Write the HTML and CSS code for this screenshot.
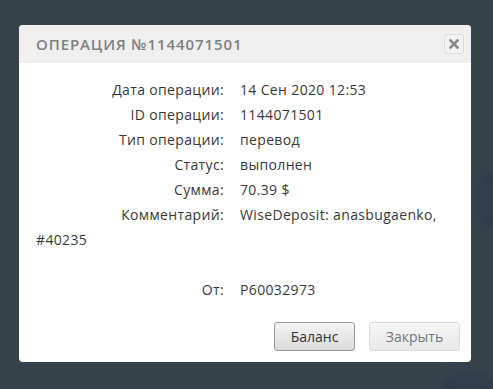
FILE: index.html
```html
<!DOCTYPE html>
<html lang="ru">
<head>
  <meta charset="UTF-8">
  <title>Операция №1144071501</title>
  <link rel="stylesheet" href="styles.css">
</head>
<body>
<div class="screen">

  <div class="blob blob-right"></div>
  <div class="blob blob-bottom"></div>

  <div class="dialog">
    <div class="dialog-head">
      <span class="dialog-title">Операция №1144071501</span>
      <button class="close" title="Закрыть">
        <svg width="10" height="10" viewBox="0 0 10 10">
          <path d="M1.5 1.5 L8.5 8.5 M8.5 1.5 L1.5 8.5" stroke="#8a8a8a" stroke-width="2.6" stroke-linecap="square"/>
        </svg>
      </button>
    </div>

    <div class="dialog-body">
      <div class="row"><span class="lbl">Дата операции:</span>14 Сен 2020 12:53</div>
      <div class="row"><span class="lbl">ID операции:</span>1144071501</div>
      <div class="row"><span class="lbl">Тип операции:</span>перевод</div>
      <div class="row"><span class="lbl">Статус:</span>выполнен</div>
      <div class="row"><span class="lbl">Сумма:</span>70.39 $</div>
      <div class="row"><span class="lbl">Комментарий:</span>WiseDeposit: anasbugaenko, #40235</div>
      <div class="row empty"></div>
      <div class="row"><span class="lbl">От:</span>P60032973</div>
    </div>

    <div class="dialog-foot">
      <button class="btn btn-main">Баланс</button>
      <button class="btn btn-close">Закрыть</button>
    </div>
  </div>

</div>
</body>
</html>
```

FILE: styles.css
```css
body {
  margin: 0;
  background: #37434b;
  font-family: 'Open Sans', sans-serif;
}

.screen {
  position: relative;
  height: 389px;
  overflow: hidden;
  padding-top: 25px;
  box-sizing: border-box;
}

.blob {
  position: absolute;
  border-radius: 50%;
  background: #2f3e4a;
  filter: blur(4px);
}

.blob-right {
  width: 40px;
  height: 60px;
  left: 476px;
  top: 170px;
}

.blob-bottom {
  width: 60px;
  height: 40px;
  left: 440px;
  top: 372px;
}

.dialog {
  position: relative;
  margin-left: 19px;
  width: 452px;
  background: white;
  border-radius: 4px;
  overflow: hidden;
}

.dialog-head {
  height: 38px;
  background: #efefef;
  display: flex;
  align-items: center;
  justify-content: space-between;
  padding: 0 7px 0 17px;
}

.dialog-title {
  text-transform: uppercase;
  color: #808080;
  font-size: 15px;
  font-weight: 600;
  letter-spacing: 0.9px;
}

.close {
  width: 20px;
  height: 20px;
  border: 1px solid #dcdcdc;
  border-radius: 3px;
  background: #f2f2f2;
  padding: 0;
  display: flex;
  align-items: center;
  justify-content: center;
}

.dialog-body {
  padding: 14px 17px 0 17px;
  color: #383838;
  font-size: 14px;
  letter-spacing: 0.35px;
}

.row {
  line-height: 25px;
}

.empty {
  height: 25px;
}

.lbl {
  display: inline-block;
  width: 188px;
  margin-right: 16px;
  text-align: right;
}

.dialog-foot {
  display: flex;
  justify-content: flex-end;
  gap: 14px;
  padding: 20px 11px 11px 0;
}

.btn {
  height: 29px;
  padding: 0;
  font-family: 'Open Sans', sans-serif;
  font-size: 14px;
  border-radius: 3px;
}

.btn-main {
  width: 81px;
  color: #333;
  border: 1px solid #9a9a9a;
  background: linear-gradient(#f4f4f4, #dadada);
}

.btn-close {
  width: 91px;
  color: #777;
  border: 1px solid #dcdcdc;
  background: linear-gradient(#f6f6f6, #e8e8e8);
}
```
